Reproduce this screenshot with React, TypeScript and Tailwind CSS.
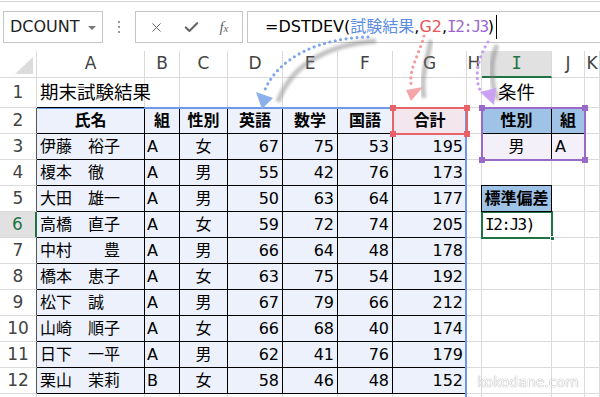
import { X, Check } from "lucide-react";
import type { ReactNode } from "react";

const cols = ["A", "B", "C", "D", "E", "F", "G", "H", "I", "J", "K"];

const heads = ["氏名", "組", "性別", "英語", "数学", "国語", "合計"];

const people: (string | number)[][] = [
  ["伊藤　裕子", "A", "女", 67, 75, 53, 195],
  ["榎本　徹", "A", "男", 55, 42, 76, 173],
  ["大田　雄一", "A", "男", 50, 63, 64, 177],
  ["高橋　直子", "A", "女", 59, 72, 74, 205],
  ["中村　　豊", "A", "男", 66, 64, 48, 178],
  ["橋本　恵子", "A", "女", 63, 75, 54, 192],
  ["松下　誠", "A", "男", 67, 79, 66, 212],
  ["山崎　順子", "A", "女", 66, 68, 40, 174],
  ["日下　一平", "A", "男", 62, 41, 76, 179],
  ["栗山　茉莉", "B", "女", 58, 46, 48, 152],
];

// one sheet cell: r = excel row (1..13), c = column index (0 = A)
function SheetCell({ r, c }: { r: number; c: number }) {
  let cls = "flex items-center whitespace-nowrap overflow-hidden border-r border-b border-[#dadada] bg-white";
  let content: ReactNode = null;

  if (r === 1 && c === 0) {
    cls = "flex items-center whitespace-nowrap overflow-visible border-r border-b border-r-[#dadada] border-b-black bg-white pl-[3px] text-[18.5px] relative z-10";
    content = "期末試験結果";
  } else if (r === 1 && c < 7) {
    cls = "flex items-center border-r border-b border-r-[#dadada] border-b-black bg-white";
  } else if (r === 1 && c === 8) {
    cls = "flex items-center justify-center border-r border-b border-[#dadada] bg-white text-[18.5px]";
    content = "条件";
  } else if (r === 2 && c < 7) {
    cls =
      c === 6
        ? "flex items-center justify-center font-bold border-r border-b border-black bg-[#f3e6ec]"
        : "flex items-center justify-center font-bold border-r border-b border-black bg-[#ecf1fb]";
    content = heads[c];
  } else if (r >= 3 && r <= 12 && c < 7) {
    const v = people[r - 3][c];
    if (c === 0) cls = "flex items-center whitespace-nowrap pl-[3px] border-r border-b border-black bg-[#ecf1fb]";
    else if (c === 1) cls = "flex items-center pl-[2px] border-r border-b border-black bg-[#ecf1fb]";
    else if (c === 2) cls = "flex items-center justify-center border-r border-b border-black bg-[#ecf1fb]";
    else cls = "flex items-center justify-end pr-[3px] border-r border-b border-black bg-[#ecf1fb]";
    content = v;
  } else if (r === 2 && (c === 8 || c === 9)) {
    cls = "flex items-center justify-center font-bold border-r border-b border-black bg-[#9fc2e7]";
    content = c === 8 ? "性別" : "組";
  } else if (r === 3 && c === 8) {
    cls = "flex items-center justify-center border-r border-b border-black bg-[#f3f0f9]";
    content = "男";
  } else if (r === 3 && c === 9) {
    cls = "flex items-center pl-[3px] border-r border-b border-black bg-[#f3f0f9]";
    content = "A";
  } else if (r === 5 && c === 8) {
    cls = "relative z-10 -ml-px -mt-px flex items-center justify-center font-bold border border-black bg-[#9fc2e7]";
    content = "標準偏差";
  } else if (r === 6 && c === 8) {
    cls = "flex items-center pl-[3px] border-r border-b border-[#dadada] bg-white";
    content = <span className="font-['DejaVu_Sans_Mono',monospace] text-[16px] tracking-[-1.5px]">I2:J3)</span>;
  }

  return <div className={cls}>{content}</div>;
}

function RowHeader({ r }: { r: number }) {
  if (r === 6) {
    return (
      <div className="flex items-center justify-center border-r-2 border-b border-r-[#217346] border-b-[#dadada] bg-[#e1e1e1] text-[#217346] text-[17px]">
        {r}
      </div>
    );
  }
  if (r >= 2 && r <= 12) {
    return (
      <div className="flex items-center justify-center border-r border-b border-r-[#555] border-b-[#dadada] bg-white text-[#444] text-[17px]">
        {r}
      </div>
    );
  }
  // 13行目は画面の下で切れるので番号は出さない
  return (
    <div className="flex items-center justify-center border-r border-b border-[#dadada] bg-white text-[#444] text-[17px]">
      {r === 1 ? r : null}
    </div>
  );
}

function Corners({ color }: { color: string }) {
  return (
    <>
      <span className="absolute -left-[4px] -top-[4px] h-[6px] w-[6px]" style={{ background: color }} />
      <span className="absolute -right-[4px] -top-[4px] h-[6px] w-[6px]" style={{ background: color }} />
      <span className="absolute -left-[4px] -bottom-[4px] h-[6px] w-[6px]" style={{ background: color }} />
      <span className="absolute -right-[4px] -bottom-[4px] h-[6px] w-[6px]" style={{ background: color }} />
    </>
  );
}

export default function App() {
  const rows = [1, 2, 3, 4, 5, 6, 7, 8, 9, 10, 11, 12, 13];

  return (
    <div className="relative h-[397px] w-[600px] overflow-hidden bg-white font-['DejaVu_Sans','Noto_Sans_CJK_JP',sans-serif] text-[16px] text-black">
      {/* 数式バー */}
      <div className="mt-px flex h-[50px] items-start border-t border-[#d4d4d4] pl-[3px] pt-[9px]">
        <div className="flex h-[32px] w-[100px] items-center justify-between border border-[#c6c6c6] pl-[6px] pr-[6px] text-[16px] text-[#222]">
          <span>DCOUNT</span>
          <span className="mt-px h-0 w-0 border-x-[4px] border-t-[4px] border-x-transparent border-t-[#777]" />
        </div>
        <div className="flex h-[32px] w-[32px] flex-col items-center justify-center gap-[3px]">
          <span className="h-[2px] w-[2px] bg-[#999]" />
          <span className="h-[2px] w-[2px] bg-[#999]" />
          <span className="h-[2px] w-[2px] bg-[#999]" />
        </div>
        <div className="flex h-[32px] w-[108px] items-center justify-around border border-[#c6c6c6] px-[4px] text-[#666]">
          <X size={15} strokeWidth={1.6} />
          <Check size={17} strokeWidth={3} />
          <span className="font-['Liberation_Serif',serif] text-[15px] italic">
            f<span className="text-[11px]">x</span>
          </span>
        </div>
        <div className="ml-[4px] flex h-[32px] flex-1 items-center border border-r-0 border-[#c6c6c6] pl-[17px] text-[16px] text-black">
          <span>=DSTDEV(</span>
          <span className="text-[#5b8de6]">試験結果</span>
          <span>,</span>
          <span className="text-[#e8545a]">G2</span>
          <span>,</span>
          <span className="font-['DejaVu_Sans_Mono',monospace] text-[16px] tracking-[-1.5px] text-[#9b68d4]">I2:J3</span>
          <span>)</span>
          <span className="ml-[2px] h-[24px] w-px bg-black" />
        </div>
      </div>

      {/* シート */}
      <div className="grid grid-cols-[37px_108px_35px_48px_55px_55px_55px_74px_15px_70px_33px_15px] grid-rows-[27px_30px_repeat(12,26px)]">
        <div className="relative border-r border-b border-[#dadada] bg-white">
          <svg className="absolute bottom-[3px] right-[3px]" width="18" height="17" viewBox="0 0 18 17">
            <polygon points="18,0 18,17 0,17" fill="#dcdcdc" />
          </svg>
        </div>
        {cols.map((c) =>
          c === "I" ? (
            <div key={c} className="flex items-center justify-center border-r border-b-2 border-r-[#dadada] border-b-[#217346] bg-[#e1e1e1] font-['DejaVu_Sans_Mono',monospace] text-[17px] text-[#217346]">
              {c}
            </div>
          ) : (
            <div key={c} className="flex items-center justify-center border-r border-b border-[#dadada] bg-white text-[17px] text-[#444]">
              {c}
            </div>
          )
        )}
        {rows.map((r) => [
          <RowHeader key={`h${r}`} r={r} />,
          ...cols.map((_, ci) => <SheetCell key={`${r}-${ci}`} r={r} c={ci} />),
        ])}
      </div>

      {/* 参照範囲の枠 */}
      <div className="absolute left-[37px] top-[107px] h-[300px] w-[430px] border-t-2 border-r-2 border-[#6f98e6]" />
      <div className="absolute left-[392px] top-[107px] h-[28px] w-[76px] border-2 border-[#e8626a]">
        <Corners color="#e8626a" />
      </div>
      <div className="absolute left-[481px] top-[107px] h-[54px] w-[105px] border-2 border-[#9a6acb]">
        <Corners color="#9a6acb" />
      </div>
      <div className="absolute left-[481px] top-[211px] h-[28px] w-[72px] border-2 border-[#217346]">
        <span className="absolute -bottom-[4px] -right-[4px] h-[5px] w-[5px] border border-white bg-[#217346]" />
      </div>

      {/* 矢印 */}
      <svg className="pointer-events-none absolute left-0 top-0" width="600" height="397" viewBox="0 0 600 397">
        <defs>
          <filter id="sh" x="-20%" y="-20%" width="140%" height="140%">
            <feGaussianBlur stdDeviation="1.8" />
          </filter>
        </defs>
        <path d="M376 41 C332 44 292 62 278 102" stroke="#777" strokeWidth="5" fill="none" opacity="0.45" filter="url(#sh)" />
        <path d="M431 40 C428 58 420 76 424 98" stroke="#777" strokeWidth="5" fill="none" opacity="0.45" filter="url(#sh)" />
        <path d="M497 45 C490 62 490 82 498 100" stroke="#777" strokeWidth="5" fill="none" opacity="0.45" filter="url(#sh)" />

        <path d="M368 37 C322 38 278 56 264 92" stroke="#7ea6ea" strokeWidth="3.2" strokeDasharray="0 5.5" strokeLinecap="round" fill="none" />
        <polygon points="256,92 273,98 262,109" fill="#8cb0ec" />

        <path d="M424 36 C419 55 407 72 412 88" stroke="#f19aa0" strokeWidth="3.2" strokeDasharray="0 5.5" strokeLinecap="round" fill="none" />
        <polygon points="423,87 406,90 411,101" fill="#f4a6a8" />

        <path d="M488 42 C478 58 474 76 480 90" stroke="#c79cf0" strokeWidth="3.2" strokeDasharray="0 5.5" strokeLinecap="round" fill="none" />
        <polygon points="480,92 496,88 494,105" fill="#caa2f3" />
      </svg>

      {/* ウォーターマーク */}
      <span className="absolute left-[477px] top-[372px] font-['DejaVu_Sans',sans-serif] text-[14px] text-white opacity-80 [text-shadow:0_0_1px_#888,0_0_1px_#888]">
        kokodane.com
      </span>
    </div>
  );
}
